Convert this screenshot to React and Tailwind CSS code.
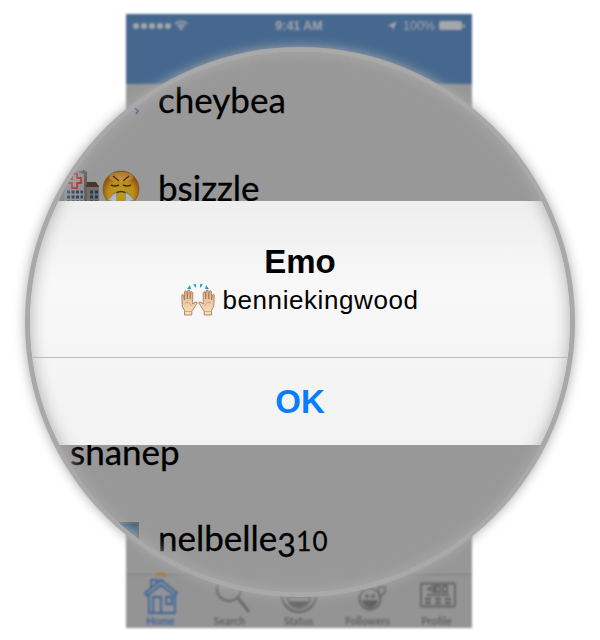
import React from "react";

function StatusBar() {
  return (
    <div className="relative flex h-[70px] items-start bg-[#46688f] px-[7px] pt-[3px] font-['Liberation_Sans',sans-serif] text-[12px] leading-[18px] text-[#a5a8ab]">
      <div className="flex h-[17px] flex-1 items-center gap-[2px]">
        <i className="size-[6px] rounded-full bg-[#a5a8ab]" />
        <i className="size-[6px] rounded-full bg-[#a5a8ab]" />
        <i className="size-[6px] rounded-full bg-[#a5a8ab]" />
        <i className="size-[6px] rounded-full bg-[#a5a8ab]" />
        <i className="size-[6px] rounded-full bg-[#a5a8ab]" />
        <svg className="ml-[1px]" width="14" height="11" viewBox="0 0 14 11" fill="none" stroke="#a5a8ab" strokeWidth="1.8">
          <path d="M1 4Q7 -1.2 13 4M3.4 6.5Q7 3.4 10.6 6.5" />
          <path d="M4.8 8Q7 6.2 9.2 8L7 10.4Z" fill="#a5a8ab" stroke="none" />
        </svg>
      </div>
      <div className="text-[12.5px] font-bold">9:41 AM</div>
      <div className="flex h-[17px] flex-1 items-center justify-end">
        <svg width="10" height="10" viewBox="0 0 10 10" fill="#a5a8ab">
          <path d="M0.5 5L9.5 .5L6 9.5L5 5.5Z" />
        </svg>
        <span className="ml-[6px] text-[12.5px]">100%</span>
        <i className="ml-[4px] h-[9px] w-[23px] rounded-[2px] bg-[#a5a8ab]" />
        <i className="ml-[1px] h-[4px] w-[2px] rounded-r-sm bg-[#a5a8ab]" />
      </div>
    </div>
  );
}

function Tab({ label, active, children }) {
  return (
    <div className={"flex w-[69px] shrink-0 flex-col items-center " + (active ? "text-[#3e649a]" : "text-[#626262]")}>
      <svg className="overflow-visible" width="40" height="41" viewBox="0 0 40 41" fill="none" stroke="currentColor" strokeWidth="1.8">
        {children}
      </svg>
      <span className="text-[10.5px] font-bold leading-[10px]">{label}</span>
    </div>
  );
}

function TabBar() {
  return (
    <div className="flex h-[54px] border-t border-[#7f7f7f] bg-[#949494] font-[Lato,sans-serif]">
      <Tab label="Home" active>
        <path d="M15 1Q20 -3 25 1" stroke="#a87738" strokeWidth="2.5" />
        <path d="M4 18L20 5L36 18L34 21L20 10L6 21ZM8 19V38H34V19M10 12V5H16V8M12 37V22H20V37M25 22H31V29H25Z" />
      </Tab>
      <Tab label="Search">
        <circle cx="19" cy="14" r="12" />
        <path d="M28 23L39 37" strokeWidth="2.5" />
      </Tab>
      <Tab label="Status">
        <circle cx="20" cy="20" r="17" strokeWidth="2" />
        <path d="M8 22H32Q29 33 20 33Q11 33 8 22Z" />
        <path d="M12 27Q20 34 28 27Z" fill="currentColor" />
      </Tab>
      <Tab label="Followers">
        <circle cx="22" cy="24" r="10.5" />
        <path d="M14 16L10 11M31 17L30 12L37 12Q39 19 31 21" />
        <path d="M15 26H29Q27 32 22 32Q17 32 15 26Z" fill="currentColor" />
        <circle cx="19" cy="21" r="1" />
        <circle cx="25" cy="21" r="1" />
      </Tab>
      <Tab label="Profile">
        <rect x="4" y="8.5" width="34" height="23" rx="1" />
        <path d="M10 20H32" />
        <path d="M8 24H14M8 28H14M18 24H24M18 28H24M28 24H34M28 28H34" strokeWidth="2.5" />
        <path d="M11 14L17 11V17ZM19 11H23V17H19ZM26 11H30V17H26Z" />
      </Tab>
    </div>
  );
}

function Hospital() {
  return (
    <svg className="mt-[3px]" width="40" height="40" viewBox="0 0 40 40">
      <path d="M0 14H8V40H0Z" fill="#777" />
      <path d="M6 4L12 2H25V40H5Z" fill="#929090" />
      <path d="M18 3L25 1L28 3V40H25V5Z" fill="#646060" />
      <path d="M28 15L40 16V40H28Z" fill="#746e6a" />
      <path d="M28 13H37L40 18H27Z" fill="#4a3430" />
      <path d="M13 5H18V9H22V14H18V19H13V14H9V10H13Z" fill="#a3938f" stroke="#ad342f" strokeWidth="1.8" />
      <path d="M8 23H24M8 28H24M8 33H24" stroke="#244763" strokeWidth="3" strokeDasharray="3 1.5" />
      <path d="M31 23H39M31 28H39M31 33H39" stroke="#1d3e5b" strokeWidth="3" strokeDasharray="3 2" />
    </svg>
  );
}

function SteamFace() {
  return (
    <svg className="mt-[4px]" width="38" height="38" viewBox="0 0 38 38">
      <defs>
        <radialGradient id="face" cx=".5" cy=".62" r=".55">
          <stop offset="0" stopColor="#b99d20" />
          <stop offset=".65" stopColor="#ba8b1b" />
          <stop offset="1" stopColor="#8e5211" />
        </radialGradient>
      </defs>
      <circle cx="19" cy="19" r="18" fill="url(#face)" stroke="#87501a" strokeWidth=".7" />
      <ellipse cx="19" cy="7" rx="12" ry="5" fill="#cfa657" opacity=".5" />
      <path d="M11 6L17 11M27 6L21 11" stroke="#4b2a0a" strokeWidth="1.3" />
      <path d="M9 15Q13 17 17 15M21 15Q25 17 29 15" stroke="#4b2a0a" strokeWidth="1.6" fill="none" />
      <path d="M12 24Q19 19 26 24" stroke="#4b2a0a" strokeWidth="1.6" fill="none" />
      <path d="M14 22L15 33L9 35L10 31L6 30ZM24 22L23 33L29 35L28 31L32 30Z" fill="#aeb9c2" stroke="#768da2" strokeWidth=".6" />
    </svg>
  );
}

function RaisedHands() {
  return (
    <svg width="34" height="32" viewBox="0 0 34 32">
      <defs>
        <linearGradient id="skin" x1="0" y1="0" x2="0" y2="1">
          <stop offset="0" stopColor="#dfb58c" />
          <stop offset="1" stopColor="#f8dfc2" />
        </linearGradient>
        <g id="hand">
          <path d="M3.5 31V26.5L1.2 22L.8 11Q1.6 9.3 2.6 11L3.5 16L3.6 7.5Q4.8 5.8 5.8 7.5L6.3 15L6.8 6.5Q8 5 9 6.8L9.2 15L9.8 8Q11 7 11.8 8.7L11.7 20L14 18.3Q16 17.5 16.2 19L12.4 25L10.8 27V31Z" fill="url(#skin)" stroke="#a2714b" strokeWidth=".8" />
          <path d="M4 19Q8 17 10.5 22M3.5 27.5H10.5" stroke="#c99468" strokeWidth=".7" fill="none" />
        </g>
      </defs>
      <use href="#hand" />
      <use href="#hand" transform="translate(34 0) scale(-1 1)" />
      <path d="M6 5L9 1L10 5ZM12 .5L15 0L15 4ZM19 0L22 .5L19 4ZM24 5L25 1L28 5Z" fill="#249fc2" />
    </svg>
  );
}

function Row({ name, className = "", children }) {
  return (
    <div className={"flex h-[88px] shrink-0 items-center " + className}>
      {children}
      <span>{name}</span>
    </div>
  );
}

function Alert() {
  return (
    <div className="absolute inset-x-0 top-[149px] flex h-[244px] flex-col bg-linear-to-b from-[#eeeeee] via-[#f8f8f8] via-35% to-[#f2f2f2] text-center font-['Liberation_Sans',Arial,sans-serif] text-black">
      <div className="flex h-[157px] flex-col items-center border-b border-[#bdbdbd] pt-[41px]">
        <h1 className="text-[33px] font-bold leading-[39px]">Emo</h1>
        <p className="flex h-[38px] items-center gap-[7px] text-[26px] leading-[36px]">
          <RaisedHands />
          <span className="tracking-[0.58px]">benniekingwood</span>
        </p>
      </div>
      <button className="h-[87px] pt-px text-[33px] font-bold text-[#087dff]">OK</button>
    </div>
  );
}

export default function App() {
  return (
    <main className="relative h-[640px] w-[600px] overflow-hidden bg-white">
      <div className="ml-[126px] h-[628px] w-[346px] pt-[14px] blur-[1px]">
        <div className="flex h-full flex-col bg-[#979797]">
          <StatusBar />
          <div className="flex-1" />
          <TabBar />
        </div>
      </div>
      <section className="absolute left-[25px] top-[47px] size-[550px] rounded-full bg-[#a9a9a9] p-[5px] shadow-[0_0_12px_0px_#aaaaaa]">
        <div className="relative size-[540px] overflow-hidden rounded-full bg-[#989898]">
          <div className="flex flex-col pt-[3px] font-[Lato,sans-serif] text-[35px] leading-[44px] text-black [-webkit-text-stroke:0.3px_black]">
            <Row name="cheybea" className="pl-[128px]">
              <svg className="-ml-[26px] mr-[18px] mt-[22px]" width="8" height="12" viewBox="0 0 8 12" fill="none" stroke="#2e5b9c" strokeWidth="1.5">
                <path d="M5 0L3 4L6 7L4 10" />
              </svg>
            </Row>
            <Row name="bsizzle" className="pl-[29px] [&>span]:ml-[18px]">
              <Hospital />
              <i className="w-[3px]" />
              <SteamFace />
            </Row>
            <Row />
            <Row />
            <Row name="shanep" className="pl-[40px]" />
            <Row
              className="pl-[70px]"
              name={
                <>
                  nelbelle<span className="relative top-[6px] inline-block w-[19px] text-[32px]">3</span>
                  <span className="text-[26px] tracking-[1px]">10</span>
                </>
              }
            >
              <i className="mr-[19px] h-[34px] w-[39px] border-2 border-[#676767] bg-linear-to-b from-[#315d86] to-[#9cafb9]" />
            </Row>
          </div>
          <Alert />
          <div className="pointer-events-none absolute inset-0 rounded-full shadow-[inset_0_0_16px_0px_#acacac]" />
        </div>
      </section>
    </main>
  );
}
